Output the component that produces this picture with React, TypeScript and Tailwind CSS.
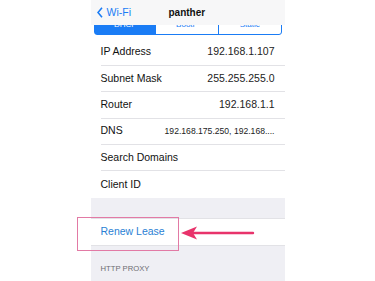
import React from "react";

const rows: { label: string; value?: string; small?: boolean }[] = [
  { label: "IP Address", value: "192.168.1.107" },
  { label: "Subnet Mask", value: "255.255.255.0" },
  { label: "Router", value: "192.168.1.1" },
  { label: "DNS", value: "192.168.175.250, 192.168....", small: true },
  { label: "Search Domains" },
  { label: "Client ID" },
];

const Row = ({ label, value, small, last }: { label: string; value?: string; small?: boolean; last?: boolean }) => (
  <div className="flex h-[26.4px] shrink-0 items-center bg-white pl-[10px]">
    <div
      className={`flex h-full flex-1 items-center justify-between pr-[10px] ${last ? "" : "border-b border-[#e2e2e6]"}`}
    >
      <span className="text-[10.5px] text-[#111]">{label}</span>
      {value && <span className={small ? "text-[8.6px] text-[#222]" : "text-[10.5px] text-[#222]"}>{value}</span>}
    </div>
  </div>
);

export default function App() {
  return (
    <div
      className="relative h-[281px] w-[375px] overflow-hidden bg-white"
      style={{ fontFamily: '"Liberation Sans", Arial, sans-serif' }}
    >
      <div className="mx-auto flex h-full w-[194px] flex-col">
        {/* nav bar */}
        <div className="relative z-10 flex h-[25px] shrink-0 items-center bg-[#f7f7f8]">
          <div className="flex items-center pl-[6px] text-[#1a7cf5]">
            <svg width="6" height="11" viewBox="0 0 6 11" className="mr-[4px]">
              <polyline points="5,0.8 1,5.5 5,10.2" fill="none" stroke="#1a7cf5" strokeWidth="1.6" />
            </svg>
            <span className="text-[10.5px]">Wi-Fi</span>
          </div>
          <span className="absolute left-[78px] text-[10px] font-bold text-[#111]">panther</span>
        </div>

        {/* segmented control, clipped under nav bar */}
        <div className="h-[10px] shrink-0 overflow-hidden px-[3px]">
          <div className="-mt-[10px] flex h-[20px] rounded-[3px] border border-[#1a7cf5] text-[8px] leading-none">
            <div className="flex flex-1 items-center justify-center bg-[#1a7cf5] text-white">DHCP</div>
            <div className="flex flex-1 items-center justify-center border-r border-[#1a7cf5] text-[#1a7cf5]">BootP</div>
            <div className="flex flex-1 items-center justify-center text-[#1a7cf5]">Static</div>
          </div>
        </div>

        <div className="h-[4.5px] shrink-0 bg-white" />

        {rows.map((r, i) => (
          <Row key={r.label} {...r} last={i === rows.length - 1} />
        ))}

        <div className="h-[21px] shrink-0 border-b border-[#e2e2e6] bg-[#efeff4]" />
        <div className="flex h-[26px] shrink-0 items-center bg-white pl-[10px]">
          <span className="text-[10.5px] text-[#2a7fd4]">Renew Lease</span>
        </div>
        <div className="min-h-0 flex-1 border-t border-[#e2e2e6] bg-[#efeff4] pl-[10px] pt-[19px] text-[7.7px] leading-none text-[#6d6d72]">
          HTTP PROXY
        </div>
      </div>

      {/* annotation box */}
      <div className="absolute left-[77px] top-[217px] h-[34px] w-[102px] border border-[#e27aa5]" />
      {/* annotation arrow */}
      <svg className="absolute left-[180px] top-[225px]" width="76" height="16" viewBox="0 0 76 16">
        <line x1="12" y1="8" x2="73" y2="8" stroke="#e8336b" strokeWidth="2.4" strokeLinecap="round" />
        <polygon points="1,8 17,1.5 13,8 17,14.5" fill="#e8336b" />
      </svg>
    </div>
  );
}
